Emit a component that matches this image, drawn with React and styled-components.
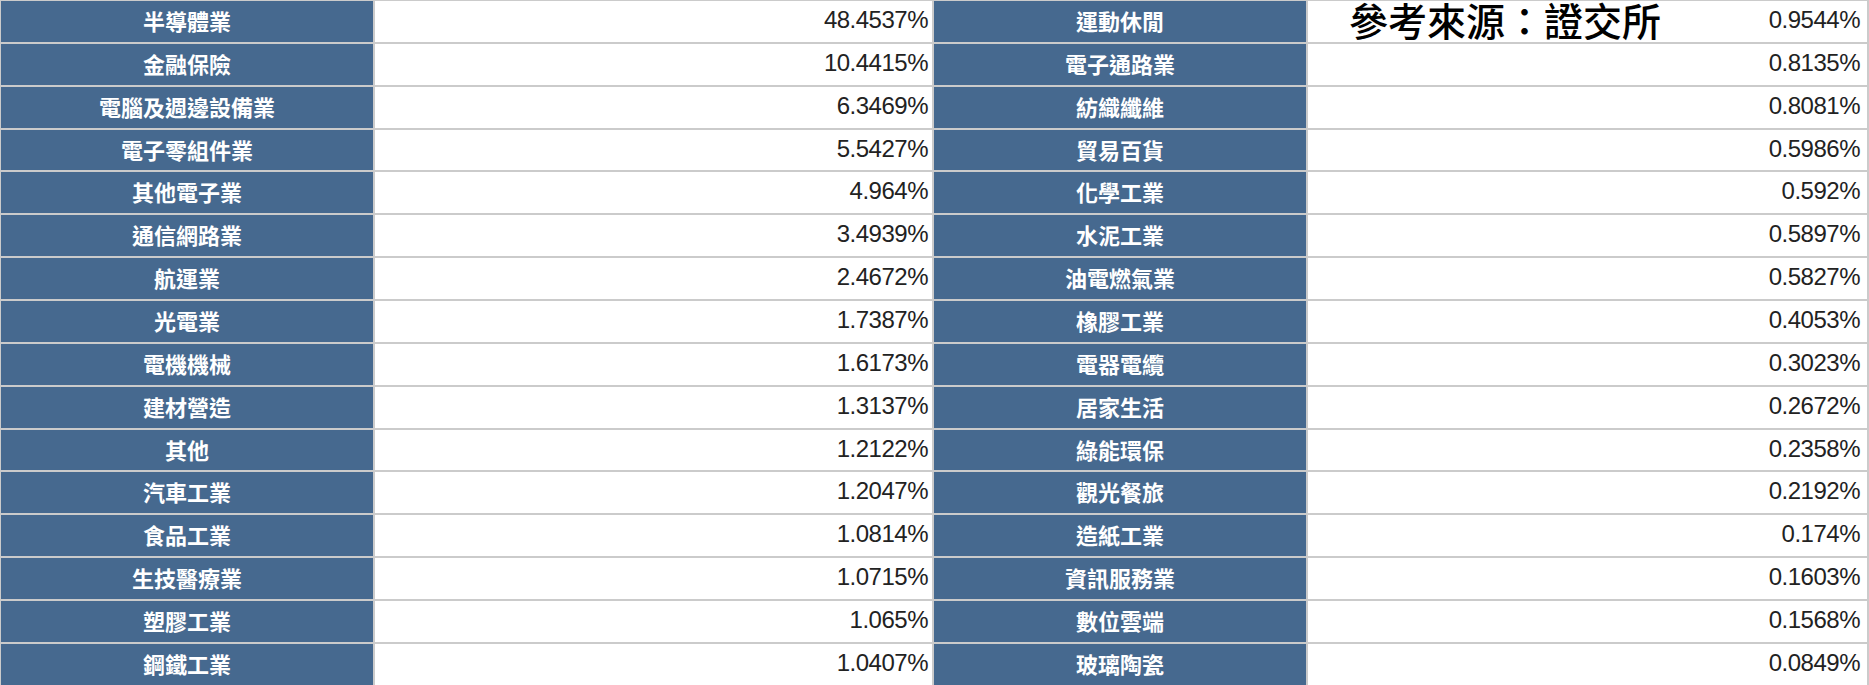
import styled, { createGlobalStyle } from "styled-components";

const GlobalStyle = createGlobalStyle`
  html, body {
    margin: 0;
    padding: 0;
    background: #ffffff;
    overflow: hidden;
  }
`;

const Sheet = styled.div`
  display: grid;
  grid-template-columns: 372px 557px 372px 559px;
  grid-auto-rows: 40.86px;
  gap: 2px;
  padding: 2px;
  margin: -1px 0 0 -1px;
  width: fit-content;
  background-color: #cbcbcb;
`;

const Industry = styled.div`
  display: flex;
  align-items: center;
  justify-content: center;
  background-color: #46698f;
  color: #ffffff;
  font-family: "Noto Sans CJK TC", "Noto Sans", sans-serif;
  font-weight: 700;
  font-size: 22px;
  padding-bottom: 3px;
`;

const Weight = styled.div`
  position: relative;
  display: flex;
  align-items: center;
  justify-content: flex-end;
  background-color: #ffffff;
  color: #222222;
  font-family: "Liberation Sans", Arial, sans-serif;
  font-size: 24px;
  letter-spacing: -0.5px;
  padding-right: ${(props) => (props.$last ? "7px" : "4px")};
  padding-bottom: 3px;
`;

const Source = styled.div`
  position: absolute;
  left: 41px;
  top: -3px;
  font-family: "Noto Sans CJK TC", sans-serif;
  font-weight: 500;
  font-size: 39px;
  line-height: 1.1;
  color: #000000;
  letter-spacing: 0;
  white-space: nowrap;
`;

const leftList = [
  ["半導體業", "48.4537%"],
  ["金融保險", "10.4415%"],
  ["電腦及週邊設備業", "6.3469%"],
  ["電子零組件業", "5.5427%"],
  ["其他電子業", "4.964%"],
  ["通信網路業", "3.4939%"],
  ["航運業", "2.4672%"],
  ["光電業", "1.7387%"],
  ["電機機械", "1.6173%"],
  ["建材營造", "1.3137%"],
  ["其他", "1.2122%"],
  ["汽車工業", "1.2047%"],
  ["食品工業", "1.0814%"],
  ["生技醫療業", "1.0715%"],
  ["塑膠工業", "1.065%"],
  ["鋼鐵工業", "1.0407%"],
];

const rightList = [
  ["運動休閒", "0.9544%"],
  ["電子通路業", "0.8135%"],
  ["紡織纖維", "0.8081%"],
  ["貿易百貨", "0.5986%"],
  ["化學工業", "0.592%"],
  ["水泥工業", "0.5897%"],
  ["油電燃氣業", "0.5827%"],
  ["橡膠工業", "0.4053%"],
  ["電器電纜", "0.3023%"],
  ["居家生活", "0.2672%"],
  ["綠能環保", "0.2358%"],
  ["觀光餐旅", "0.2192%"],
  ["造紙工業", "0.174%"],
  ["資訊服務業", "0.1603%"],
  ["數位雲端", "0.1568%"],
  ["玻璃陶瓷", "0.0849%"],
];

function Row({ left, right, first }) {
  return (
    <>
      <Industry>{left[0]}</Industry>
      <Weight>{left[1]}</Weight>
      <Industry>{right[0]}</Industry>
      <Weight $last>
        {first && <Source>參考來源：證交所</Source>}
        {right[1]}
      </Weight>
    </>
  );
}

export default function App() {
  return (
    <>
      <GlobalStyle />
      <Sheet>
        {leftList.map(([name, pct], i) => (
          <Row key={name} left={[name, pct]} right={rightList[i]} first={i === 0} />
        ))}
      </Sheet>
    </>
  );
}
